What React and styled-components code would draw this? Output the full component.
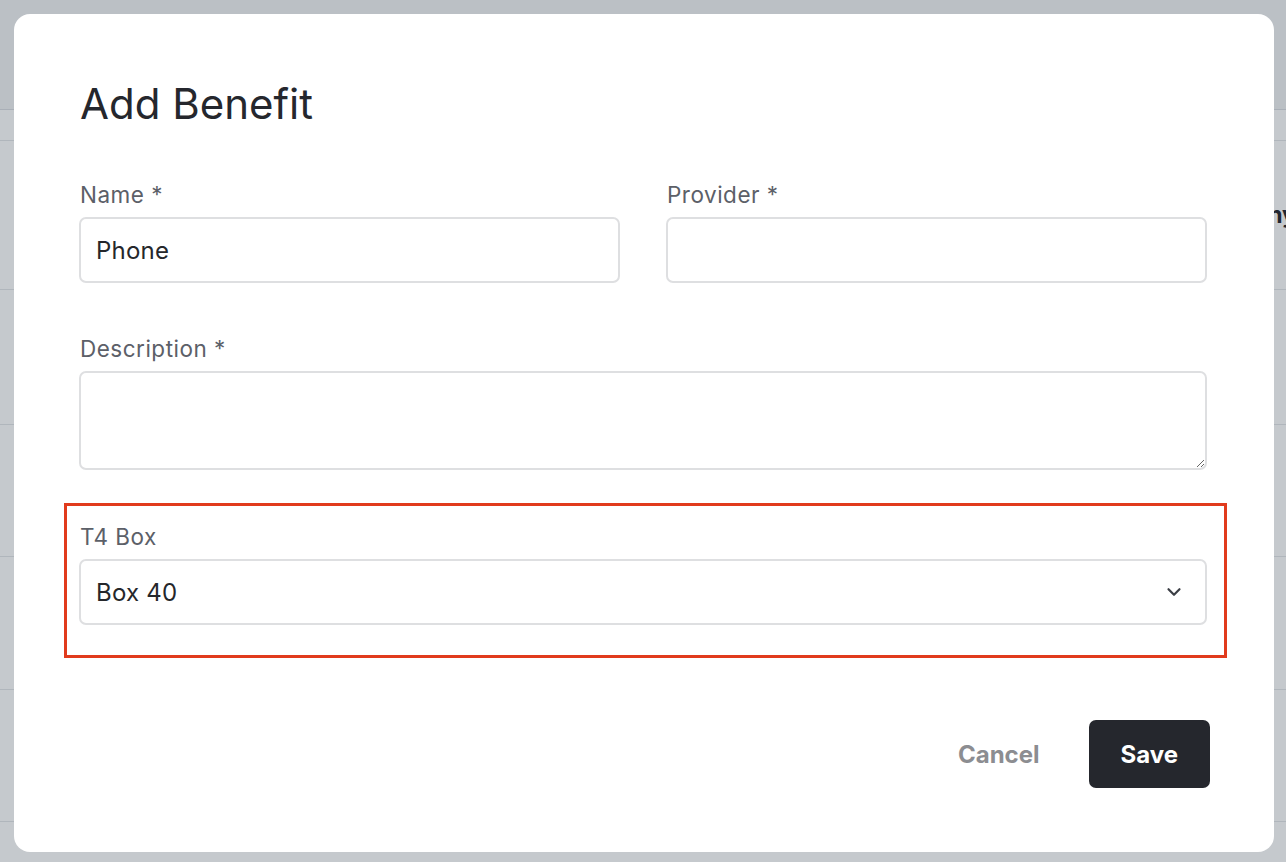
import React from 'react';
import styled, { createGlobalStyle } from 'styled-components';
import { ChevronDown } from 'lucide-react';

const GlobalStyle = createGlobalStyle`
  html, body {
    margin: 0;
    padding: 0;
    height: 100%;
    background: #ffffff;
    font-family: Inter, "Noto Sans", sans-serif;
  }
  * { box-sizing: border-box; }
`;

const Page = styled.div`
  width: 100%;
  height: 862px;
  overflow: hidden;
  display: flex;
  flex-direction: column;
`;

const TopBar = styled.div`
  height: 110px;
  flex-shrink: 0;
  background: #f2f3f5;
  border-bottom: 1px solid #d9dce1;
`;

const SubBar = styled.div`
  height: 31px;
  flex-shrink: 0;
  border-bottom: 1px solid #e3e5e8;
`;

const Row = styled.div`
  height: ${(p) => p.$h}px;
  flex-shrink: 0;
  display: flex;
  align-items: center;
  padding-left: 1188px;
  white-space: nowrap;
  border-bottom: 1px solid #e3e5e8;
  font-size: 23px;
  font-weight: 700;
  color: #1f2229;
`;

const Overlay = styled.div`
  position: fixed;
  inset: 0;
  background: rgba(40, 55, 70, 0.27);
  display: flex;
  align-items: flex-start;
  justify-content: center;
  padding: 14px 12px 0 14px;
`;

const Modal = styled.div`
  width: 1260px;
  background: #ffffff;
  border-radius: 16px;
  padding: 64px 67px 64px 65px;
  display: flex;
  flex-direction: column;
`;

const Title = styled.h1`
  margin: 0 0 51px 1px;
  font-size: 42px;
  line-height: 52px;
  font-weight: 400;
  color: #25272d;
`;

const Grid = styled.div`
  display: grid;
  grid-template-columns: 1fr 1fr;
  column-gap: 46px;
  margin-bottom: 52px;
`;

const Field = styled.div`
  display: flex;
  flex-direction: column;
  gap: 8px;
`;

const Label = styled.label`
  padding-left: 1px;
  font-size: 22.5px;
  line-height: 28px;
  letter-spacing: 0.5px;
  color: #5c6068;
`;

const Input = styled.input`
  height: 66px;
  width: 100%;
  border: 2px solid #dedfe1;
  border-radius: 7px;
  padding: 0 15px;
  font-family: inherit;
  font-size: 24px;
  letter-spacing: 0.2px;
  color: #25272b;
  outline: none;
`;

const TextArea = styled.textarea`
  height: 99px;
  width: 100%;
  border: 2px solid #dedfe1;
  border-radius: 7px;
  padding: 12px 15px;
  font-family: inherit;
  font-size: 24px;
  color: #25272b;
  outline: none;
  resize: vertical;
  display: block;
`;

const Highlight = styled.div`
  margin: 33px -20px 0 -15px;
  padding: 17px 17px 30px 12px;
  border: 3px solid #e13b1d;
`;

const SelectBox = styled.div`
  height: 66px;
  border: 2px solid #dedfe1;
  border-radius: 7px;
  padding: 0 20px 0 15px;
  display: flex;
  align-items: center;
  justify-content: space-between;
  font-size: 24px;
  letter-spacing: 0.2px;
  color: #25272b;
  svg { color: #3b3e45; }
`;

const Footer = styled.div`
  display: flex;
  justify-content: flex-end;
  align-items: center;
  gap: 49px;
  margin: 62px -3px 0 0;
`;

const Button = styled.button`
  height: 68px;
  border: none;
  border-radius: 7px;
  font-family: inherit;
  font-size: 24px;
  font-weight: 700;
  cursor: pointer;
  padding: ${(p) => (p.$primary ? '0 32px' : '0')};
  background: ${(p) => (p.$primary ? '#25272d' : 'transparent')};
  color: ${(p) => (p.$primary ? '#ffffff' : '#8c8d91')};
`;

export default function App() {
  return (
    <>
      <GlobalStyle />
      <Page>
        <TopBar />
        <SubBar />
        <Row $h={149}>Company</Row>
        <Row $h={135} />
        <Row $h={132} />
        <Row $h={133} />
        <Row $h={132} />
      </Page>
      <Overlay>
        <Modal>
          <Title>Add Benefit</Title>
          <Grid>
            <Field>
              <Label>Name *</Label>
              <Input defaultValue="Phone" />
            </Field>
            <Field>
              <Label>Provider *</Label>
              <Input />
            </Field>
          </Grid>
          <Field>
            <Label>Description *</Label>
            <TextArea />
          </Field>
          <Highlight>
            <Field>
              <Label>T4 Box</Label>
              <SelectBox>
                <span>Box 40</span>
                <ChevronDown size={22} strokeWidth={2.4} />
              </SelectBox>
            </Field>
          </Highlight>
          <Footer>
            <Button>Cancel</Button>
            <Button $primary>Save</Button>
          </Footer>
        </Modal>
      </Overlay>
    </>
  );
}
